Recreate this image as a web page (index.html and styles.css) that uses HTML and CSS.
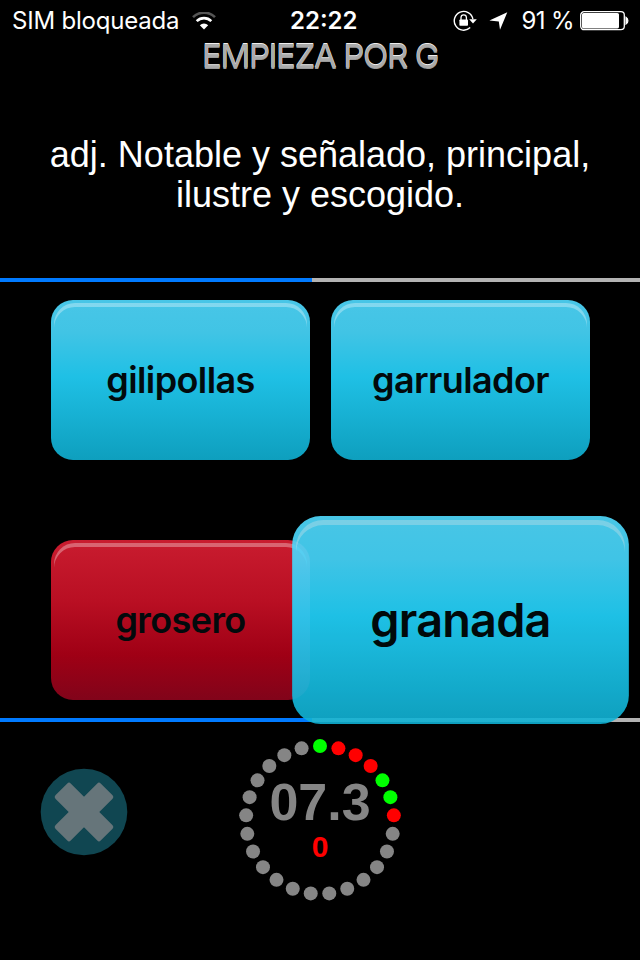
FILE: index.html
```
<!DOCTYPE html>
<html lang="es">
<head>
    <meta charset="UTF-8">
    <meta name="viewport" content="width=device-width, initial-scale=1.0">
    <title>Empieza por G</title>
    <link rel="stylesheet" href="styles.css">
</head>
<body>
    <div class="status-bar">
        <div class="status-left">
            <span class="carrier">SIM bloqueada</span>
            <svg class="wifi" width="24" height="18" viewBox="0 0 24 18">
                <path d="M1 5.2 A15.5 15.5 0 0 1 23 5.2" fill="none" stroke="#555" stroke-width="2.6"/>
                <path d="M4.7 9.2 A10.3 10.3 0 0 1 19.3 9.2" fill="none" stroke="#fff" stroke-width="2.6"/>
                <path d="M12 17.5 L7.8 13.2 A6 6 0 0 1 16.2 13.2 Z" fill="#fff"/>
            </svg>
        </div>
        <span class="clock">22:22</span>
        <div class="status-right">
            <svg class="lock" width="24" height="22" viewBox="0 0 24 22">
                <path d="M19.9 9 A9.4 9.4 0 1 0 17.2 17.6" fill="none" stroke="#fff" stroke-width="1.4"/>
                <path d="M16.2 9.2 H23.8 L20 13.4 Z" fill="#fff"/>
                <rect x="6.4" y="9.5" width="8.6" height="6.2" rx="0.8" fill="#fff"/>
                <path d="M8 10 V7.6 A2.7 2.7 0 0 1 13.4 7.6 V10" fill="none" stroke="#fff" stroke-width="1.3"/>
            </svg>
            <svg class="arrow" width="19" height="18" viewBox="0 0 19 18">
                <path d="M18.3 0.3 L11 17.7 L9.8 9.6 L0.4 8.4 Z" fill="#fff"/>
            </svg>
            <span class="percent">91 %</span>
            <svg class="battery" width="50" height="20" viewBox="0 0 50 20">
                <rect x="0.7" y="0.7" width="43.6" height="18" rx="3.4" fill="none" stroke="#fff" stroke-width="1.3"/>
                <rect x="2" y="2" width="37" height="15.4" rx="1.6" fill="#fff"/>
                <path d="M46 6.3 A4 4 0 0 1 46 13.1 Z" fill="#fff" stroke="#fff" stroke-width="1.2"/>
            </svg>
        </div>
    </div>

    <h1>EMPIEZA POR G</h1>

    <p class="definition">adj. Notable y señalado, principal,<br>ilustre y escogido.</p>

    <div class="progress"><div class="progress-fill"></div></div>

    <div class="answers">
        <button class="answer">gilipollas</button>
        <button class="answer">garrulador</button>
        <button class="answer wrong">grosero</button>
        <button class="answer selected">granada</button>
    </div>

    <div class="progress"><div class="progress-fill"></div></div>

    <footer>
        <button class="close" aria-label="Cerrar">
            <svg width="88" height="88" viewBox="0 0 88 88">
                <circle cx="44" cy="44" r="43.3" fill="#104651"/>
                <g transform="rotate(45 44 44)" fill="#66757a">
                    <rect x="33.2" y="12" width="21.6" height="64" rx="2.4"/>
                    <rect x="12" y="33.2" width="64" height="21.6" rx="2.4"/>
                </g>
            </svg>
        </button>
        <div class="timer">
            <svg class="ring" id="ring" width="164" height="164" viewBox="0 0 164 164"></svg>
            <div class="timer-text">
                <span class="seconds">07.3</span>
                <span class="score">0</span>
            </div>
        </div>
    </footer>

    <script>
        // Resultados de las letras jugadas: v = acierto, x = fallo
        const results = 'vxxxvvx';
        const total = 25;
        let dots = '';
        for (let i = 0; i < total; i++) {
            const angle = i * 2 * Math.PI / total;
            const x = 82 + 74 * Math.sin(angle);
            const y = 82 - 74 * Math.cos(angle);
            const color = results[i] === 'v' ? '#00ff00' : results[i] === 'x' ? '#ff0000' : '#858585';
            dots += `<circle cx="${x}" cy="${y}" r="7" fill="${color}"/>`;
        }
        document.getElementById('ring').innerHTML = dots;
    </script>
</body>
</html>
```
FILE: styles.css
```
* {
    box-sizing: border-box;
}

body {
    margin: 0;
    width: 640px;
    height: 960px;
    display: flex;
    flex-direction: column;
    overflow: hidden;
    background-color: #000;
    color: #fff;
    font-family: Inter, "Liberation Sans", sans-serif;
}

/* Barra de estado */
.status-bar {
    display: grid;
    grid-template-columns: 278px auto 1fr;
    align-items: center;
    height: 41px;
    padding: 1px 10px 0 12px;
    font-size: 24px;
    line-height: 40px;
}

.status-left,
.status-right {
    display: flex;
    align-items: center;
}

.status-right {
    justify-content: flex-end;
}

.carrier {
    letter-spacing: -0.2px;
}

.wifi {
    margin-left: 13px;
}

.clock {
    font-weight: 600;
    letter-spacing: 0;
}

.arrow {
    margin-left: 12px;
}

.percent {
    margin-left: 13px;
    margin-right: 6px;
    letter-spacing: -0.6px;
}

/* Título */
h1 {
    margin: 0;
    height: 39px;
    font-size: 33px;
    font-weight: 400;
    line-height: 30px;
    letter-spacing: -1.35px;
    text-align: center;
    color: #aaa;
    text-shadow: 0 -1px 0 #eee, 0 1px 0 #999;
}

.definition {
    margin: 0;
    height: 198px;
    padding-top: 55px;
    font-family: "Liberation Sans", Arial, sans-serif;
    font-size: 36px;
    line-height: 40px;
    text-align: center;
}

/* Barras de progreso */
.progress {
    height: 4px;
    background-color: #b3b3b3;
}

.progress-fill {
    width: 312px;
    height: 4px;
    background-color: #007aff;
}

/* Respuestas */
.answers {
    display: grid;
    grid-template-columns: 259px 259px;
    grid-auto-rows: 160px;
    gap: 80px 21px;
    padding: 18px 0 18px 51px;
}

button {
    padding: 0;
    border: none;
    background: none;
    font-family: inherit;
}

.answer {
    position: relative;
    border-radius: 22px;
    background: linear-gradient(#48c6e7, #41c4e5 20%, #1fc0e5 48%, #0e9fbe);
    color: #020a0c;
    font-size: 36px;
    font-weight: 600;
    letter-spacing: -0.6px;
}

/* Brillo del borde superior */
.answer::before {
    content: "";
    position: absolute;
    inset: 3px 3px auto 3px;
    height: 60px;
    border-radius: 21px 21px 0 0;
    box-shadow: inset 0 4px 0 rgba(255, 255, 255, 0.32);
}

.answer.wrong {
    background: linear-gradient(#c91c2f, #b90f23 38%, #9f0015 72%, #81041a);
}

.answer.selected {
    transform: scale(1.3);
    opacity: 0.9;
    background: linear-gradient(#50dcff, #48daff 20%, #22d5fe 48%, #10b1d3);
}

/* Pie */
footer {
    flex: 1;
    display: grid;
    grid-template-columns: 198px 1fr;
    padding: 16px 0 0 40px;
}

.close {
    width: 88px;
    height: 88px;
    margin-top: 30px;
}

.close svg {
    display: block;
}

.timer {
    display: grid;
    width: 164px;
    height: 164px;
}

.ring,
.timer-text {
    grid-area: 1 / 1;
}

.timer-text {
    display: flex;
    flex-direction: column;
    align-items: center;
    padding-top: 36px;
    font-family: "Liberation Sans", Arial, sans-serif;
    font-weight: bold;
}

.seconds {
    color: #858585;
    font-size: 52px;
    line-height: 57px;
}

.score {
    color: #ff0000;
    font-size: 30px;
    line-height: 32px;
}
```
